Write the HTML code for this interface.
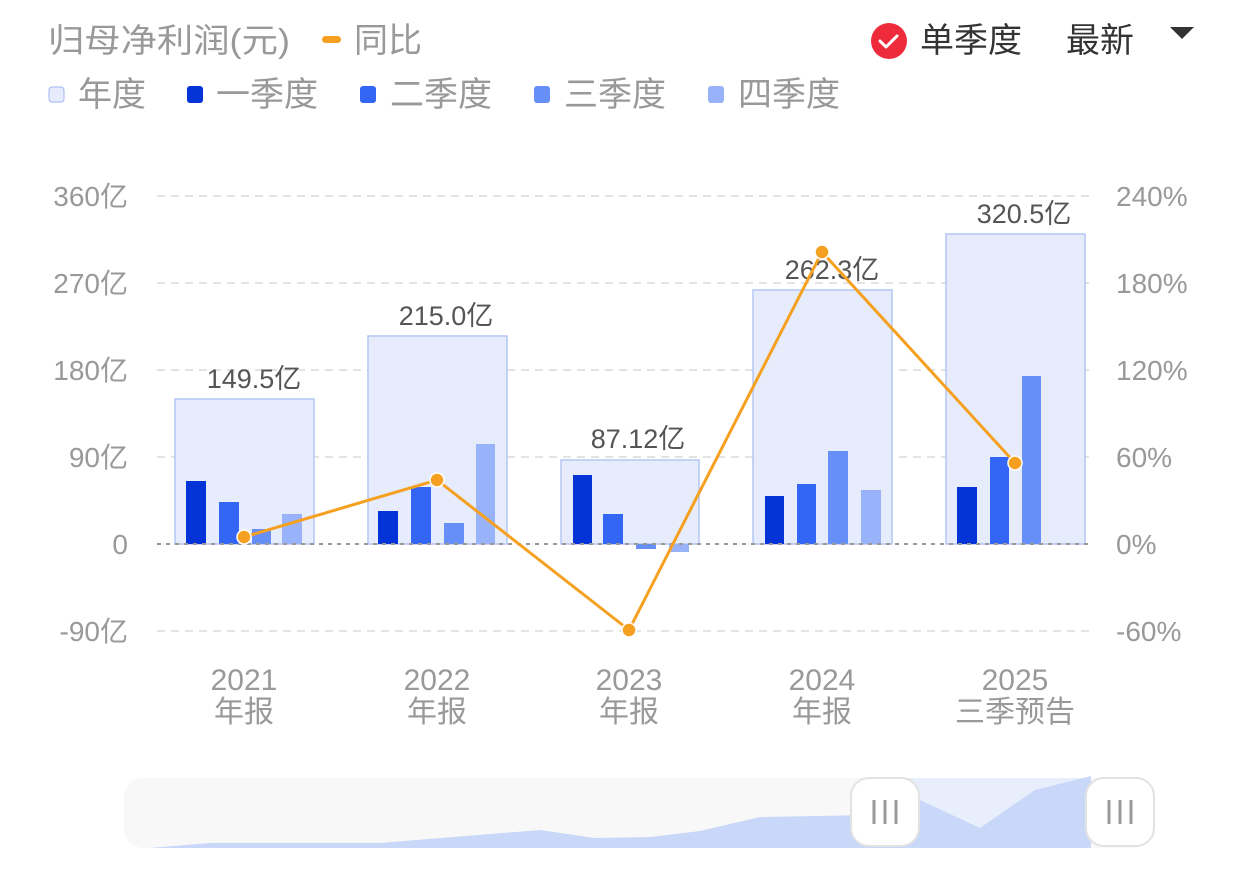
<!DOCTYPE html>
<html><head><meta charset="utf-8"><style>
body{margin:0;width:1242px;height:876px;background:#fff;overflow:hidden;font-family:"Liberation Sans","Noto Sans CJK SC",sans-serif}
svg text{font-family:"Liberation Sans","Noto Sans CJK SC",sans-serif}
</style></head><body>
<svg width="1242" height="876" viewBox="0 0 1242 876">
<text x="48" y="52" font-size="33" fill="#999" textLength="242" lengthAdjust="spacingAndGlyphs">归母净利润(元)</text>
<rect x="322" y="36" width="19" height="7" rx="3.5" fill="#f5a020"/>
<text x="354" y="52" font-size="34" fill="#999">同比</text>
<circle cx="889" cy="41" r="18" fill="#ee2b3b"/>
<path d="M880 41 l6 6 l11 -11" stroke="#fff" stroke-width="3" fill="none" stroke-linecap="round" stroke-linejoin="round"/>
<text x="920" y="52" font-size="34" fill="#333">单季度</text>
<text x="1066" y="52" font-size="34" fill="#333">最新</text>
<path d="M1170 27 h24 l-12 12z" fill="#333"/>
<g font-size="34" fill="#999">
<rect x="49" y="87" width="15" height="15" rx="3" fill="#e6ecfc" stroke="#9fb6ee"/>
<text x="78" y="106">年度</text>
<rect x="187" y="86" width="16" height="17" rx="3" fill="#0433d8"/>
<text x="216" y="106">一季度</text>
<rect x="360" y="86" width="16" height="17" rx="3" fill="#3366f5"/>
<text x="390" y="106">二季度</text>
<rect x="534" y="86" width="16" height="17" rx="3" fill="#6690f7"/>
<text x="564" y="106">三季度</text>
<rect x="708" y="86" width="16" height="17" rx="3" fill="#99b3fb"/>
<text x="738" y="106">四季度</text>
</g>
<g stroke="#e3e3e3" stroke-width="2" stroke-dasharray="8 6">
<line x1="157" y1="196" x2="1092" y2="196"/><line x1="157" y1="283" x2="1092" y2="283"/>
<line x1="157" y1="370" x2="1092" y2="370"/><line x1="157" y1="457" x2="1092" y2="457"/>
<line x1="157" y1="631" x2="1092" y2="631"/>
</g>
<g font-size="28" fill="#999" text-anchor="end">
<text x="128" y="206">360亿</text><text x="128" y="293">270亿</text><text x="128" y="380">180亿</text>
<text x="128" y="467">90亿</text><text x="128" y="554">0</text><text x="128" y="641">-90亿</text>
</g>
<g font-size="28" fill="#999">
<text x="1116" y="206">240%</text><text x="1116" y="293">180%</text><text x="1116" y="380">120%</text>
<text x="1116" y="467">60%</text><text x="1116" y="554">0%</text><text x="1116" y="641">-60%</text>
</g>
<g fill="#e6ecfc" stroke="#b3c6f5" stroke-width="1.5">
<rect x="175" y="399" width="139" height="145"/><rect x="368" y="336" width="139" height="208"/>
<rect x="561" y="460" width="138" height="84"/><rect x="753" y="290" width="139" height="254"/>
<rect x="946" y="234" width="139" height="310"/>
</g>
<g>
<rect x="186" y="481" width="20" height="63" fill="#0433d8"/><rect x="219" y="502" width="20" height="42" fill="#3366f5"/><rect x="252" y="529" width="19" height="15" fill="#6690f7"/><rect x="282" y="514" width="20" height="30" fill="#99b3fb"/>
<rect x="378" y="511" width="20" height="33" fill="#0433d8"/><rect x="411" y="487" width="20" height="57" fill="#3366f5"/><rect x="444" y="523" width="20" height="21" fill="#6690f7"/><rect x="476" y="444" width="19" height="100" fill="#99b3fb"/>
<rect x="573" y="475" width="19" height="69" fill="#0433d8"/><rect x="603" y="514" width="20" height="30" fill="#3366f5"/><rect x="636" y="544" width="20" height="5" fill="#6690f7"/><rect x="669" y="544" width="20" height="8" fill="#99b3fb"/>
<rect x="765" y="496" width="19" height="48" fill="#0433d8"/><rect x="797" y="484" width="19" height="60" fill="#3366f5"/><rect x="828" y="451" width="20" height="93" fill="#6690f7"/><rect x="861" y="490" width="20" height="54" fill="#99b3fb"/>
<rect x="957" y="487" width="20" height="57" fill="#0433d8"/><rect x="990" y="457" width="19" height="87" fill="#3366f5"/><rect x="1022" y="376" width="19" height="168" fill="#6690f7"/>
</g>
<line x1="157" y1="544" x2="1092" y2="544" stroke="#999" stroke-width="2" stroke-dasharray="4 5"/>
<g font-size="27" fill="#555" text-anchor="middle">
<text x="254" y="388">149.5亿</text><text x="446" y="325">215.0亿</text><text x="638" y="448">87.12亿</text>
<text x="832" y="279">262.3亿</text><text x="1024" y="223">320.5亿</text>
</g>
<polyline points="244,537 437,480 629,630 822,252 1015,463" fill="none" stroke="#f5a020" stroke-width="3"/>
<g fill="#f5a020" stroke="#fff" stroke-width="1.5">
<circle cx="244" cy="537" r="7"/><circle cx="437" cy="480" r="7"/><circle cx="629" cy="630" r="7"/><circle cx="822" cy="252" r="7"/><circle cx="1015" cy="463" r="7"/>
</g>
<g font-size="30" fill="#999" text-anchor="middle">
<text x="244" y="690">2021</text><text x="244" y="722">年报</text>
<text x="437" y="690">2022</text><text x="437" y="722">年报</text>
<text x="629" y="690">2023</text><text x="629" y="722">年报</text>
<text x="822" y="690">2024</text><text x="822" y="722">年报</text>
<text x="1015" y="690">2025</text><text x="1015" y="722">三季预告</text>
</g>
<rect x="124" y="778" width="1028" height="70" rx="20" fill="#f8f8f8"/>
<rect x="885" y="778" width="206" height="70" fill="#e8eefc"/>
<path d="M150 848 L210 843 L380 843 L540 830 L595 838 L650 837 L700 831 L760 817 L870 815 L920 800 L980 828 L1035 790 L1091 776 L1091 848Z" fill="#c9d8f8"/>
<g fill="#fff" stroke="#e2e2e2" stroke-width="2">
<rect x="851" y="778" width="68" height="68" rx="18"/><rect x="1086" y="778" width="68" height="68" rx="18"/>
</g>
<g stroke="#999" stroke-width="3">
<line x1="874" y1="800" x2="874" y2="824"/><line x1="885" y1="800" x2="885" y2="824"/><line x1="896" y1="800" x2="896" y2="824"/>
<line x1="1109" y1="800" x2="1109" y2="824"/><line x1="1120" y1="800" x2="1120" y2="824"/><line x1="1131" y1="800" x2="1131" y2="824"/>
</g>
</svg>
</body></html>
